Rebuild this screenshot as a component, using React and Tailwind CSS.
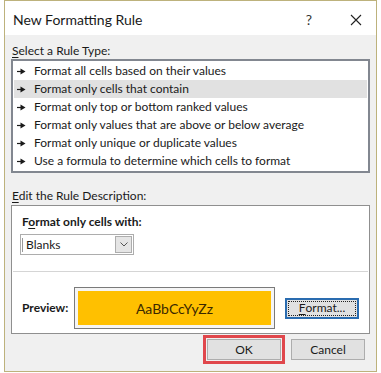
import React from 'react';

const rules = [
  'Format all cells based on their values',
  'Format only cells that contain',
  'Format only top or bottom ranked values',
  'Format only values that are above or below average',
  'Format only unique or duplicate values',
  'Use a formula to determine which cells to format',
];

function RuleArrow() {
  return (
    <svg width="9" height="7" viewBox="0 0 9 7" className="shrink-0">
      <path d="M0 3.5 H4" stroke="#1a1a1a" strokeWidth="1.2" />
      <path d="M3.5 0.5 L8.5 3.5 L3.5 6.5 Z" fill="#1a1a1a" />
    </svg>
  );
}

function Button({ children, className = '' }) {
  return (
    <div className={`w-[74px] h-[21px] border border-[#adadad] bg-[#e1e1e1] flex items-center justify-center text-[12px] text-[#1a1a1a] ${className}`}>
      {children}
    </div>
  );
}

export default function App() {
  return (
    <div className="w-[381px] h-[373px] bg-white pl-[4px] overflow-hidden" style={{ fontFamily: 'Lato, "Noto Sans", sans-serif' }}>
      <div className="w-[373px] h-[372px] border border-[#bdb27c] flex flex-col">
        {/* title bar */}
        <div className="h-[34px] bg-white flex items-center pl-[8px] shrink-0">
          <span className="text-[14px] text-[#1a1a1a] pt-[3px]">New Formatting Rule</span>
          <span className="ml-auto text-[14px] text-[#333] pt-[3px] mr-[38px]">?</span>
          <svg width="12" height="12" viewBox="0 0 12 12" className="mr-[14px] mt-[3px]">
            <path d="M1 1 L11 11 M11 1 L1 11" stroke="#222" strokeWidth="1.1" />
          </svg>
        </div>

        {/* body */}
        <div className="flex-1 bg-[#f0f0f0] pl-[6px] pr-[6px] flex flex-col">
          <div className="mt-[8px] h-[16px] leading-[16px] text-[12px] text-[#1a1a1a] pl-[1px]">
            <span className="underline underline-offset-2">S</span>elect a Rule Type:
          </div>

          <div className="mt-[0px] h-[114px] border-2 border-[#828790] bg-white py-[1px] px-[1px]">
            {rules.map((r, i) => (
              <div
                key={r}
                className={`h-[18px] flex items-center gap-[8px] pl-[3px] text-[12px] text-[#1a1a1a] ${i === 1 ? 'bg-[#e1e1e1]' : ''}`}
              >
                <RuleArrow />
                <span>{r}</span>
              </div>
            ))}
          </div>

          <div className="mt-[15px] h-[16px] leading-[16px] text-[12px] text-[#1a1a1a] pl-[1px]">
            <span className="underline underline-offset-2">E</span>dit the Rule Description:
          </div>

          <div className="mt-[1px] h-[129px] border border-[#8f8f8f] bg-white flex flex-col">
            <div className="mt-[8px] ml-[10px] h-[16px] leading-[16px] text-[12px] font-bold text-[#1a1a1a]">
              F<span className="underline underline-offset-2">o</span>rmat only cells with:
            </div>
            <div className="mt-[4px] ml-[8px] w-[114px] h-[21px] border border-[#adadad] bg-white flex items-center">
              <span className="pl-[3px] text-[12px] text-[#1a1a1a] border-l border-[#999] leading-[14px] ml-[1px]">Blanks</span>
              <div className="ml-auto mr-[1px] w-[17px] h-[17px] border border-[#adadad] bg-[#e5e5e5] flex items-center justify-center">
                <svg width="8" height="5" viewBox="0 0 8 5">
                  <path d="M0.5 0.5 L4 4 L7.5 0.5" stroke="#555" strokeWidth="1" fill="none" />
                </svg>
              </div>
            </div>
            <div className="mt-[16px] mx-[1px] h-px bg-[#d5d5d5]" />
            <div className="mt-[15px] flex items-center">
              <span className="ml-[10px] w-[52px] text-[12px] font-bold text-[#1a1a1a]">Preview:</span>
              <div className="w-[201px] h-[42px] border border-[#7a7a7a] p-[3px] bg-[#f5f5f5]">
                <div className="w-full h-full bg-[#ffc000] flex items-center justify-center text-[14px] text-[#3a2800]">
                  AaBbCcYyZz
                </div>
              </div>
              <div className="ml-[10px] w-[74px] h-[21px] border-2 border-[#2a6cb0] bg-[#e1e1e1] p-[1px]">
                <div className="w-full h-full border border-dotted border-[#222] flex items-center justify-center text-[12px] text-[#1a1a1a]">
                  <span className="underline underline-offset-2">F</span>ormat...
                </div>
              </div>
            </div>
          </div>

          <div className="mt-[1px] flex items-start">
            <div className="ml-[192px] border-[3px] border-[#e0474c] p-[1px]">
              <Button>OK</Button>
            </div>
            <Button className="ml-[6px] mt-[4px]">Cancel</Button>
          </div>
        </div>
      </div>
    </div>
  );
}
